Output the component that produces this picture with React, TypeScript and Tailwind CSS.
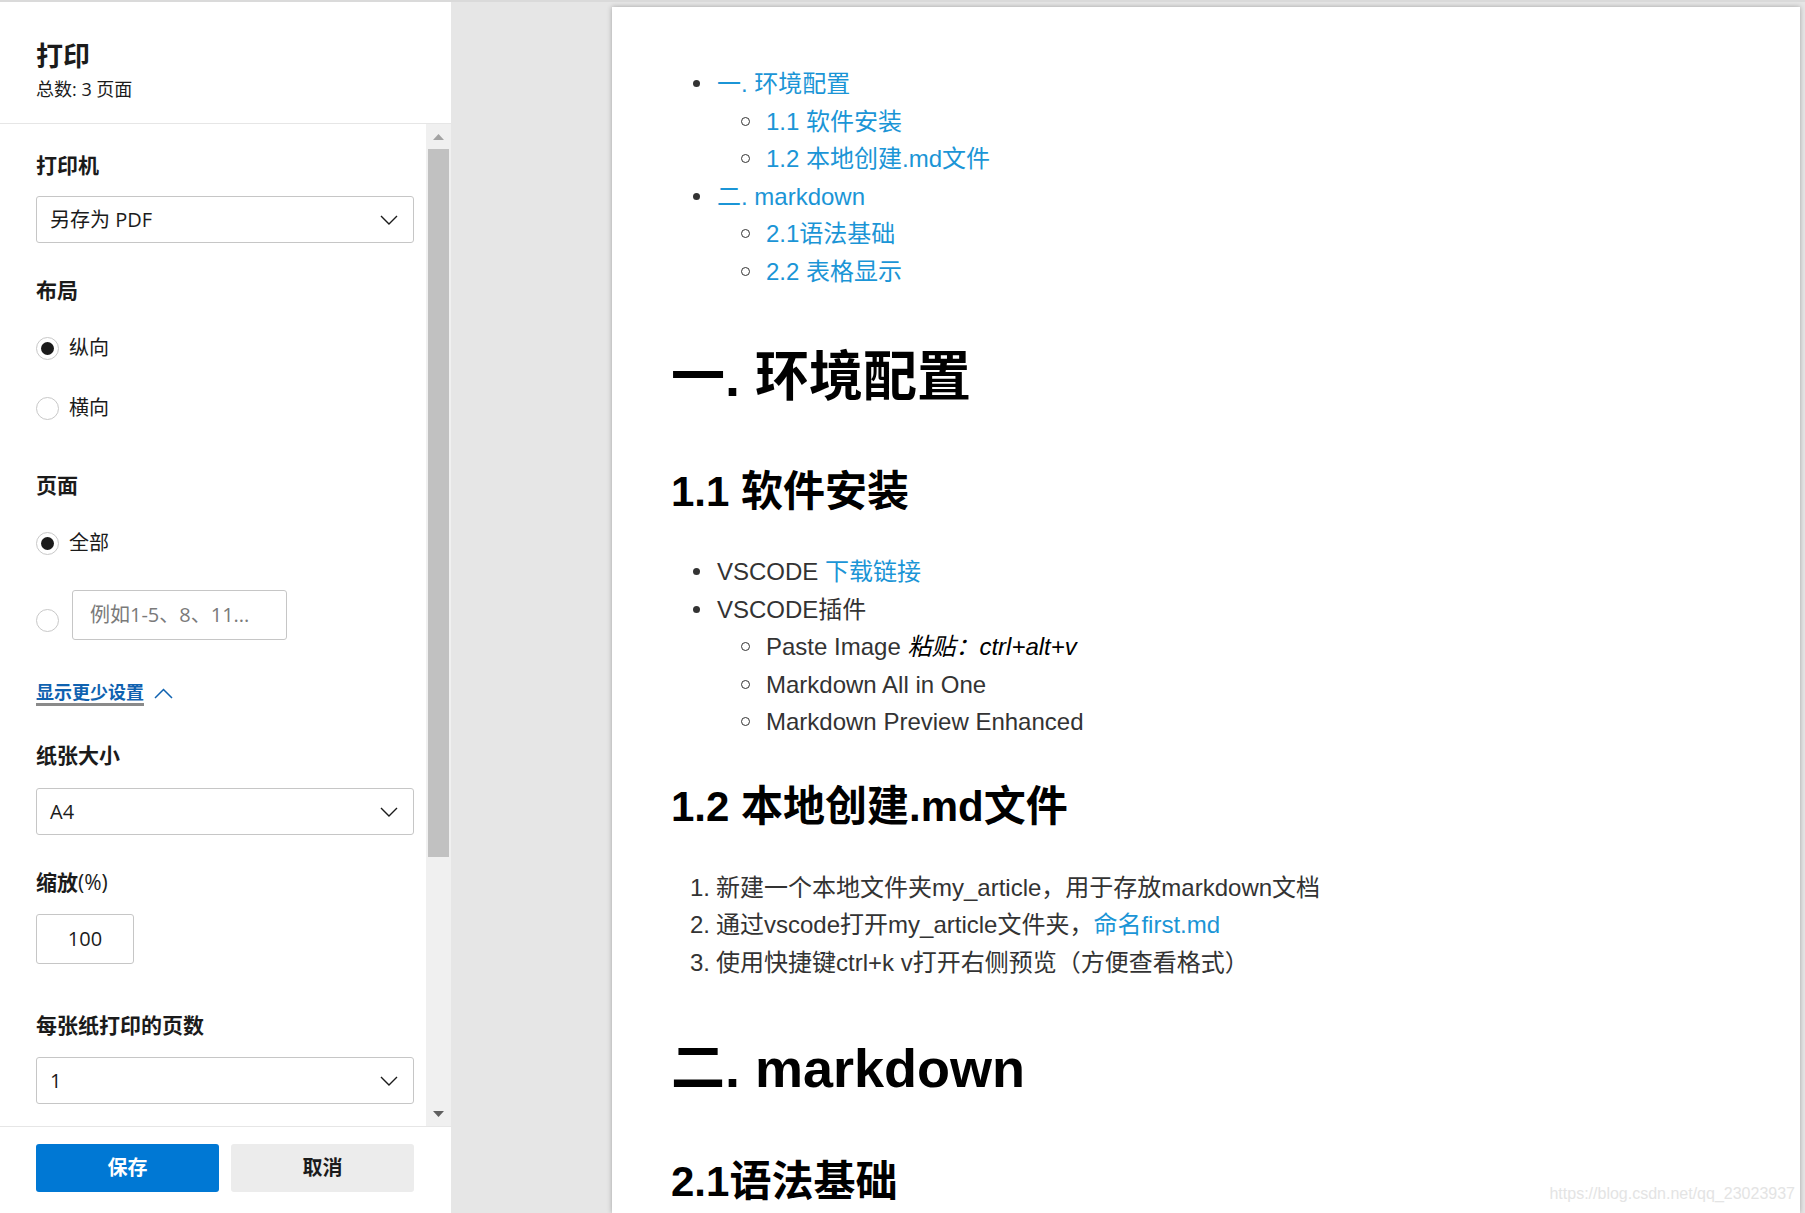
import React from "react";

function ChevronDown() {
    return (
        <svg width="18" height="10" viewBox="0 0 18 10" fill="none" stroke="#1b1b1b" strokeWidth="1.4">
            <path d="M1 1l8 8 8-8" />
        </svg>
    );
}

function Select({ value }: { value: string }) {
    return (
        <div className="flex h-[47px] items-center justify-between rounded-[3px] border border-[#c6c6c6] pl-[13px] pr-[15px] text-[20px] leading-[24px] text-[#1b1b1b]">
            <span>{value}</span>
            <ChevronDown />
        </div>
    );
}

function Radio({ checked, className = "" }: { checked?: boolean; className?: string }) {
    return (
        <span className={`flex h-[23px] w-[23px] shrink-0 items-center justify-center rounded-full border border-[#c8c8c8] bg-white ${className}`}>
            {checked && <span className="h-[13px] w-[13px] rounded-full bg-[#1b1b1b]" />}
        </span>
    );
}

function Label({ children, className = "" }: { children: React.ReactNode; className?: string }) {
    return <div className={`text-[21px] font-bold leading-[24px] text-[#1b1b1b] ${className}`}>{children}</div>;
}

function Sidebar() {
    return (
        <aside className="flex h-full w-[451px] shrink-0 flex-col bg-white font-['Open_Sans','Noto_Sans_CJK_SC',sans-serif] text-[#1b1b1b]">
            <div className="h-[122px] shrink-0 border-b border-[#e6e6e6] pl-[36px] pt-[38px]">
                <div className="text-[27px] font-bold leading-[32px]">打印</div>
                <div className="mt-[5px] text-[18px] leading-[24px]">总数: 3 页面</div>
            </div>

            <div className="flex min-h-0 flex-1">
                <div className="flex-1 overflow-hidden pl-[36px] pr-[12px]">
                    <Label className="mt-[29px]">打印机</Label>
                    <div className="mt-[19px]">
                        <Select value="另存为 PDF" />
                    </div>

                    <Label className="mt-[35px]">布局</Label>
                    <div className="mt-[34px] flex h-[24px] items-center gap-[10px] text-[20px]">
                        <Radio checked />
                        <span>纵向</span>
                    </div>
                    <div className="mt-[36px] flex h-[24px] items-center gap-[10px] text-[20px]">
                        <Radio />
                        <span>横向</span>
                    </div>

                    <Label className="mt-[53px]">页面</Label>
                    <div className="mt-[34px] flex h-[24px] items-center gap-[10px] text-[20px]">
                        <Radio checked />
                        <span>全部</span>
                    </div>
                    <div className="mt-[35px] flex items-center gap-[13px]">
                        <Radio className="mt-[10px]" />
                        <div className="flex h-[50px] w-[215px] items-center rounded-[3px] border border-[#c6c6c6] pl-[17px] text-[20px] text-[#7a7a7a]">
                            例如1-5、8、11...
                        </div>
                    </div>

                    <div className="mt-[42px] flex items-center gap-[10px]">
                        <span className="border-b-[3px] border-[#8a8a8a] text-[18px] font-semibold leading-[21px] text-[#0f62b0]">
                            显示更少设置
                        </span>
                        <svg width="19" height="11" viewBox="0 0 19 11" fill="none" stroke="#0f62b0" strokeWidth="1.5" className="-mt-[2px]">
                            <path d="M1 10l8.5-8.5L18 10" />
                        </svg>
                    </div>

                    <Label className="mt-[37px]">纸张大小</Label>
                    <div className="mt-[21px]">
                        <Select value="A4" />
                    </div>

                    <Label className="mt-[35px]">
                        缩放<span className="font-normal">(%)</span>
                    </Label>
                    <div className="mt-[20px] flex h-[50px] w-[98px] items-center justify-center rounded-[3px] border border-[#c6c6c6] text-[20px]">
                        100
                    </div>

                    <Label className="mt-[49px]">每张纸打印的页数</Label>
                    <div className="mt-[20px]">
                        <Select value="1" />
                    </div>
                </div>

                <div className="flex w-[25px] shrink-0 flex-col bg-[#f0f0f0]">
                    <div className="flex h-[25px] items-center justify-center">
                        <svg width="11" height="6" viewBox="0 0 11 6">
                            <path d="M0 6L5.5 0 11 6z" fill="#a3a3a3" />
                        </svg>
                    </div>
                    <div className="mx-[2px] h-[708px] bg-[#c1c1c1]" />
                    <div className="flex-1" />
                    <div className="flex h-[25px] items-center justify-center">
                        <svg width="11" height="6" viewBox="0 0 11 6">
                            <path d="M0 0L5.5 6 11 0z" fill="#5f5f5f" />
                        </svg>
                    </div>
                </div>
            </div>

            <div className="h-[87px] shrink-0 border-t border-[#e6e6e6] pl-[36px] pt-[17px]">
                <div className="flex gap-[12px]">
                    <button className="h-[48px] w-[183px] rounded-[3px] bg-[#0078d4] text-[20px] font-bold text-white">保存</button>
                    <button className="h-[48px] w-[183px] rounded-[3px] bg-[#ececec] text-[20px] font-bold text-[#1b1b1b]">取消</button>
                </div>
            </div>
        </aside>
    );
}

function Disc() {
    return (
        <span className="flex w-[46px] shrink-0 items-center pl-[22px]">
            <span className="h-[7px] w-[7px] rounded-full bg-[#333]" />
        </span>
    );
}

function Circle() {
    return (
        <span className="flex w-[49px] shrink-0 items-center pl-[24px]">
            <span className="h-[9px] w-[9px] rounded-full border-[1.5px] border-[#333]" />
        </span>
    );
}

const link = "text-[#1b95d6]";

function Page() {
    return (
        <div className="relative h-full overflow-hidden bg-white pl-[59px] pt-[58px] font-['Liberation_Sans','Noto_Sans_CJK_SC',sans-serif] text-[24px] leading-[37.5px] text-[#333] shadow-[0_0_5px_rgba(0,0,0,0.3)]">
            {/* toc */}
            <ul>
                <li className="flex"><Disc /><span className={link}>一. 环境配置</span></li>
                <li className="ml-[46px] flex"><Circle /><span className={link}>1.1 软件安装</span></li>
                <li className="ml-[46px] flex"><Circle /><span className={link}>1.2 本地创建.md文件</span></li>
                <li className="flex"><Disc /><span className={link}>二. markdown</span></li>
                <li className="ml-[46px] flex"><Circle /><span className={link}>2.1语法基础</span></li>
                <li className="ml-[46px] flex"><Circle /><span className={link}>2.2 表格显示</span></li>
            </ul>

            <h1 className="mt-[55px] text-[54px] font-bold leading-[64px] text-black">一. 环境配置</h1>
            <h2 className="mt-[58px] text-[42px] font-bold leading-[50px] text-black">1.1 软件安装</h2>

            <ul className="mt-[36px]">
                <li className="flex"><Disc /><span>VSCODE <span className={link}>下载链接</span></span></li>
                <li className="flex"><Disc /><span>VSCODE插件</span></li>
                <li className="ml-[46px] flex">
                    <Circle />
                    <span>Paste Image <em className="text-black">粘贴：ctrl+alt+v</em></span>
                </li>
                <li className="ml-[46px] flex"><Circle /><span>Markdown All in One</span></li>
                <li className="ml-[46px] flex"><Circle /><span>Markdown Preview Enhanced</span></li>
            </ul>

            <h2 className="mt-[41px] text-[42px] font-bold leading-[50px] text-black">1.2 本地创建.md文件</h2>

            <ol className="mt-[37px]">
                <li className="flex"><span className="w-[45px] shrink-0 pr-[6px] text-right">1.</span><span>新建一个本地文件夹my_article，用于存放markdown文档</span></li>
                <li className="flex"><span className="w-[45px] shrink-0 pr-[6px] text-right">2.</span><span>通过vscode打开my_article文件夹，<span className={link}>命名first.md</span></span></li>
                <li className="flex"><span className="w-[45px] shrink-0 pr-[6px] text-right">3.</span><span>使用快捷键ctrl+k v打开右侧预览（方便查看格式）</span></li>
            </ol>

            <h1 className="mt-[55px] text-[54px] font-bold leading-[64px] text-black">二. markdown</h1>
            <h2 className="mt-[57px] text-[42px] font-bold leading-[50px] text-black">2.1语法基础</h2>

            <div className="absolute bottom-[9px] right-[5px] text-[16px] leading-[20px] text-[#e4e4e4]">https://blog.csdn.net/qq_23023937</div>
        </div>
    );
}

export default function App() {
    return (
        <div className="flex h-[1213px] w-[1805px] overflow-hidden border-t-2 border-[#dadada] bg-[#e6e6e6]">
            <Sidebar />
            <main className="h-full flex-1 pl-[161px] pr-[5px] pt-[5px]">
                <Page />
            </main>
        </div>
    );
}
